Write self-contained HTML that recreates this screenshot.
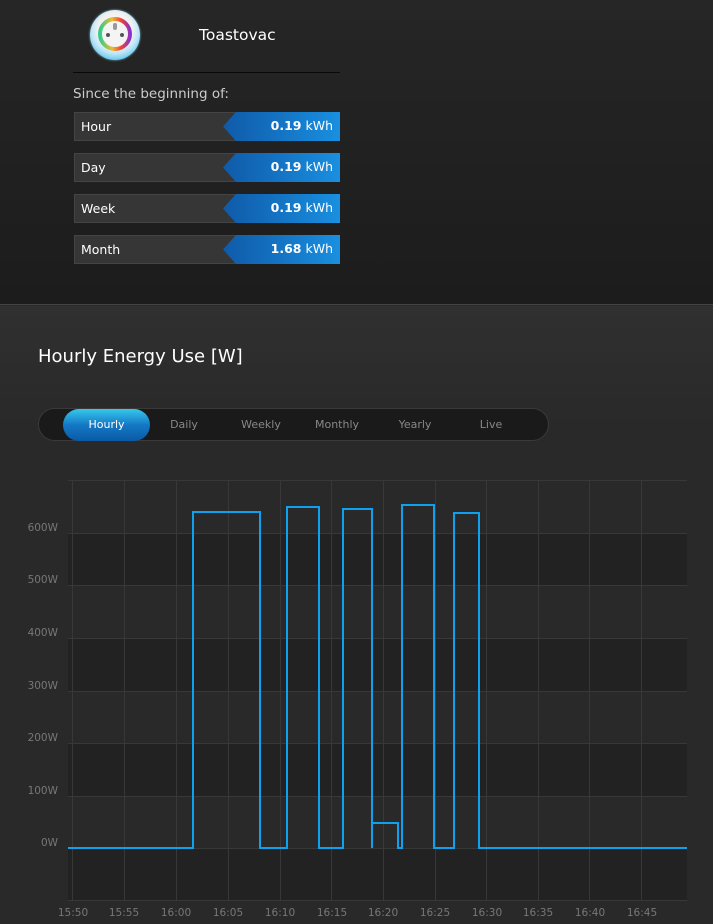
<!DOCTYPE html>
<html><head><meta charset="utf-8"><style>
*{margin:0;padding:0;box-sizing:border-box}
body{width:713px;height:924px;overflow:hidden;font-family:"DejaVu Sans","Liberation Sans",sans-serif;background:#292929;position:relative}
.top{position:absolute;left:0;top:0;width:713px;height:305px;background:linear-gradient(#262626,#1c1c1c);border-bottom:1px solid #444}
.bot{position:absolute;left:0;top:306px;width:713px;height:618px;background:linear-gradient(#303030,#292929 120px)}
.icon{position:absolute;left:90px;top:10px;width:50px;height:50px;border-radius:50%;background:radial-gradient(circle at 50% 40%,#fff 0,#f0f0f0 45%,#bfe6f7 60%,#5bc6ef 80%,#2a9fd8 100%);box-shadow:0 0 2px #7cd}
.title{position:absolute;left:199px;top:26px;color:#fff;font-size:15.5px}
.hr{position:absolute;left:73px;top:72px;width:267px;height:1px;background:#0a0a0a}
.since{position:absolute;left:73px;top:86px;color:#ccc;font-size:13.5px}
.row{position:absolute;left:74px;width:266px;height:29px;background:#363636;border:1px solid #444;border-right:none}
.row .l{position:absolute;left:6px;top:6px;color:#fff;font-size:12.5px}
.row .v{position:absolute;right:0;top:-1px;width:117px;height:29px;background:linear-gradient(90deg,#0f5aa8,#1a8fe0);clip-path:polygon(13px 0,100% 0,100% 100%,13px 100%,0 50%);color:#fff;font-size:12.5px;text-align:right;padding:6px 7px 0 0}
.row .v b{font-weight:bold}
.h2{position:absolute;left:38px;top:346px;color:#fff;font-size:18px}
.tabs{position:absolute;left:38px;top:408px;width:511px;height:33px;border-radius:17px;background:#1a1a1a;border:1px solid #3a3a3a}
.tab{position:absolute;top:9px;color:#888;font-size:11px;text-align:center;width:80px}
.act{position:absolute;left:24px;top:0;width:87px;height:32px;border-radius:16px;background:linear-gradient(#36c9ec,#1478c4 50%,#0a5aa6);color:#fff;font-size:11px;text-align:center;line-height:31px}
</style></head><body>
<div class="top">
 <div class="icon"><svg width="50" height="50" viewBox="0 0 50 50"><circle cx="25" cy="24" r="15" fill="none" stroke="url(#g)" stroke-width="4"/><defs><linearGradient id="g"><stop offset="0" stop-color="#3c8"/><stop offset=".4" stop-color="#eb3"/><stop offset=".7" stop-color="#e43"/><stop offset="1" stop-color="#83c"/></linearGradient></defs><circle cx="25" cy="24" r="12" fill="#f4f4f4"/><circle cx="18" cy="25" r="2" fill="#555"/><circle cx="32" cy="25" r="2" fill="#555"/><rect x="23" y="13" width="4" height="7" rx="2" fill="#999"/></svg></div>
 <div class="title">Toastovac</div>
 <div class="hr"></div>
 <div class="since">Since the beginning of:</div>
 <div class="row" style="top:112px"><span class="l">Hour</span><div class="v"><b>0.19</b> kWh</div></div>
 <div class="row" style="top:153px"><span class="l">Day</span><div class="v"><b>0.19</b> kWh</div></div>
 <div class="row" style="top:194px"><span class="l">Week</span><div class="v"><b>0.19</b> kWh</div></div>
 <div class="row" style="top:235px"><span class="l">Month</span><div class="v"><b>1.68</b> kWh</div></div>
</div>
<div class="bot"></div>
<div class="h2">Hourly Energy Use [W]</div>
<div class="tabs">
 <div class="act">Hourly</div>
 <div class="tab" style="left:105px">Daily</div>
 <div class="tab" style="left:182px">Weekly</div>
 <div class="tab" style="left:258px">Monthly</div>
 <div class="tab" style="left:336px">Yearly</div>
 <div class="tab" style="left:412px">Live</div>
</div>
<svg style="position:absolute;left:0;top:0" width="713" height="924">
 <g fill="#222">
  <rect x="68" y="533" width="619" height="52"/><rect x="68" y="638" width="619" height="53"/><rect x="68" y="743" width="619" height="53"/><rect x="68" y="848" width="619" height="52"/>
 </g>
 <g stroke="#383838" stroke-width="1">
  <line x1="68" x2="687" y1="480.5" y2="480.5"/><line x1="68" x2="687" y1="533.5" y2="533.5"/><line x1="68" x2="687" y1="585.5" y2="585.5"/><line x1="68" x2="687" y1="638.5" y2="638.5"/><line x1="68" x2="687" y1="691.5" y2="691.5"/><line x1="68" x2="687" y1="743.5" y2="743.5"/><line x1="68" x2="687" y1="796.5" y2="796.5"/><line x1="68" x2="687" y1="848.5" y2="848.5"/><line x1="68" x2="687" y1="900.5" y2="900.5"/>
  <line x1="72.5" x2="72.5" y1="480" y2="900"/><line x1="124.5" x2="124.5" y1="480" y2="900"/><line x1="176.5" x2="176.5" y1="480" y2="900"/><line x1="228.5" x2="228.5" y1="480" y2="900"/><line x1="280.5" x2="280.5" y1="480" y2="900"/><line x1="331.5" x2="331.5" y1="480" y2="900"/><line x1="383.5" x2="383.5" y1="480" y2="900"/><line x1="435.5" x2="435.5" y1="480" y2="900"/><line x1="486.5" x2="486.5" y1="480" y2="900"/><line x1="538.5" x2="538.5" y1="480" y2="900"/><line x1="589.5" x2="589.5" y1="480" y2="900"/><line x1="641.5" x2="641.5" y1="480" y2="900"/>
 </g>
 <g fill="#777" font-family="DejaVu Sans, sans-serif" font-size="10.5" text-anchor="end">
  <text x="58" y="531">600W</text><text x="58" y="583">500W</text><text x="58" y="636">400W</text><text x="58" y="689">300W</text><text x="58" y="741">200W</text><text x="58" y="794">100W</text><text x="58" y="846">0W</text>
 </g>
 <g fill="#777" font-family="DejaVu Sans, sans-serif" font-size="10.5" text-anchor="middle">
  <text x="73" y="916">15:50</text><text x="124" y="916">15:55</text><text x="176" y="916">16:00</text><text x="228" y="916">16:05</text><text x="280" y="916">16:10</text><text x="332" y="916">16:15</text><text x="383" y="916">16:20</text><text x="435" y="916">16:25</text><text x="487" y="916">16:30</text><text x="538" y="916">16:35</text><text x="590" y="916">16:40</text><text x="642" y="916">16:45</text>
 </g>
 <path d="M68 848H193V512H260V848H287V507H319V848H343V509H372V848V823H398V848H402V505H434V848H454V513H479V848H687" fill="none" stroke="#0fa0ee" stroke-width="2"/>
</svg>
</body></html>
